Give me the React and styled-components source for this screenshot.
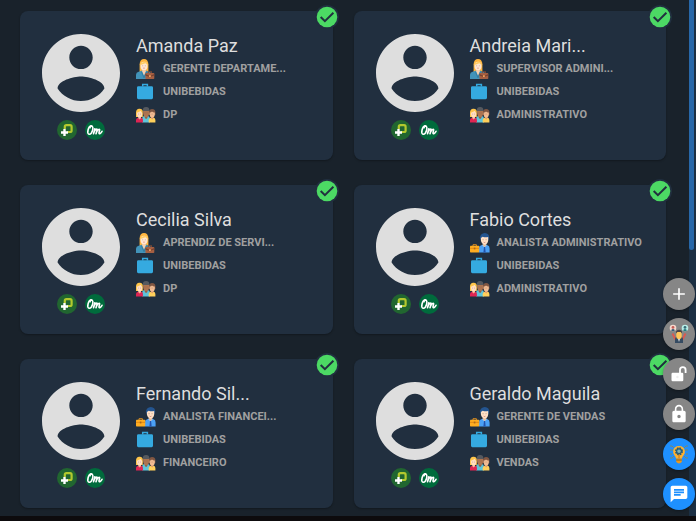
import React from "react";
import styled, { createGlobalStyle } from "styled-components";

const GlobalStyle = createGlobalStyle`
  *, *::before, *::after { box-sizing: border-box; }
  body {
    margin: 0;
    background: #19222b;
    font-family: Roboto, "Liberation Sans", sans-serif;
  }
`;

const Page = styled.div`
  display: flex;
  flex-direction: column;
  min-height: 100vh;
`;

const Content = styled.div`
  display: flex;
  flex: 1;
`;

const CardGrid = styled.main`
  flex: 1;
  min-width: 0;
  display: grid;
  grid-template-columns: repeat(2, minmax(0, 1fr));
  align-content: start;
  gap: 25px 21px;
  padding: 11px 23px 8px 20px;
`;

const ScrollTrack = styled.div`
  flex: 0 0 7px;
  background: #1b2f43;
`;

const ScrollThumb = styled.div`
  width: 5px;
  height: 48vh;
  border-radius: 0 0 3px 3px;
  background: #2767a8;
`;

const BottomStrip = styled.footer`
  height: 5px;
  background: #0d0b0d;
`;

const Card = styled.article`
  position: relative;
  display: flex;
  gap: 16px;
  min-height: 149px;
  padding: 23px 16px 16px 22px;
  border-radius: 8px;
  background: #212f3f;
  box-shadow: 0 1px 2px rgba(0, 0, 0, 0.3);
`;

const Profile = styled.div`
  flex: 0 0 auto;
  display: flex;
  flex-direction: column;
  align-items: center;
  gap: 8px;
`;

const Avatar = styled.svg`
  display: block;
  width: 78px;
  height: 78px;
  fill: #dedede;
`;

const Apps = styled.div`
  display: flex;
  gap: 8px;
  svg { display: block; width: 20px; height: 20px; }
`;

const Details = styled.div`
  min-width: 0;
  display: flex;
  flex-direction: column;
`;

const Name = styled.h2`
  margin: 0;
  font-size: 18px;
  font-weight: 400;
  line-height: 23px;
  color: #dedede;
  white-space: nowrap;
`;

const InfoList = styled.ul`
  margin: 0;
  padding: 0;
  list-style: none;
`;

const InfoItem = styled.li`
  display: flex;
  align-items: center;
  gap: 7px;
  height: 23px;
  font-size: 11px;
  font-weight: 700;
  line-height: 16px;
  color: #a0a0a0;
  white-space: nowrap;
  svg { flex: 0 0 20px; display: block; width: 20px; height: 20px; }
`;

const Badge = styled.span`
  position: absolute;
  top: -6px;
  right: -6px;
  width: 24px;
  height: 24px;
  svg { display: block; width: 24px; height: 24px; }
`;

const Actions = styled.nav`
  position: fixed;
  right: 1px;
  bottom: 11px;
  display: flex;
  flex-direction: column;
  gap: 8px;
`;

const ActionButton = styled.button`
  display: flex;
  align-items: center;
  justify-content: center;
  width: 32px;
  height: 32px;
  padding: 0;
  border: 0;
  border-radius: 50%;
  background: ${(p) => (p.$primary ? "#1e90ff" : "#868686")};
  box-shadow: 0 1px 3px rgba(0, 0, 0, 0.35);
  cursor: pointer;
  svg { display: block; width: 20px; height: 20px; fill: #fff; }
`;

const AvatarIcon = () => (
  <Avatar viewBox="2 2 20 20" role="img" aria-label="Avatar">
    <path d="M12 2C6.48 2 2 6.48 2 12s4.48 10 10 10 10-4.48 10-10S17.52 2 12 2zm0 3c1.66 0 3 1.34 3 3s-1.34 3-3 3-3-1.34-3-3 1.34-3 3-3zm0 14.2c-2.5 0-4.71-1.28-6-3.22.03-1.99 4-3.08 6-3.08 1.99 0 5.97 1.09 6 3.08-1.29 1.94-3.5 3.22-6 3.22z" />
  </Avatar>
);

const PlusAppIcon = () => (
  <svg viewBox="0 0 20 20" aria-hidden="true">
    <circle cx="10" cy="10" r="10" fill="#216630" />
    <path d="M7.8 9V6.8q0-1.6 1.6-1.6h3.6q1.6 0 1.6 1.6v3.6q0 1.6-1.6 1.6h-3" fill="none" stroke="#b3c92e" strokeWidth="2.2" />
    <path d="M7.5 9v7M4 12.5h7" stroke="#fff" strokeWidth="2.4" />
  </svg>
);

const OmAppIcon = () => (
  <svg viewBox="0 0 20 20" aria-hidden="true">
    <circle cx="10" cy="10" r="10" fill="#006b3c" />
    <g fill="none" stroke="#fff" strokeWidth="1.6" strokeLinecap="round" strokeLinejoin="round">
      <path d="M5.7 6.3C3.3 6.3 1.6 13.6 4 14.2 7 14.8 9.6 6.7 6.4 5.9c-1.4-.3-2 .9-1.2 1.7" />
      <path d="M9.8 8.7 8.5 13.7c.7-2.3 2.2-4.5 3.3-4.6.9 0-.4 3-.8 4.6.7-2.1 2-4.4 3.2-4.5 1 0-.3 2.7-.2 3.9.1 1.2 1.8.3 3-1.8" />
    </g>
  </svg>
);

const WomanIcon = () => (
  <svg viewBox="0 0 20 20" aria-hidden="true">
    <path d="M3.6 13V5.2Q4 0 8 0t4.4 5.2V13z" fill="#ffb640" />
    <path d="M0 20v-4.3q0-2.5 2.7-3L6.4 11.6h3.4l3.3 1.1q2.3.5 2.3 3V20z" fill="#4293b9" />
    <path d="M6.2 9.5h3.6v3L8 16.5l-1.8-4z" fill="#f9cfae" />
    <path d="m5.4 12.8 2.6 6 2.6-6" fill="none" stroke="#2e789d" strokeWidth=".8" />
    <ellipse cx="8" cy="6.9" rx="3.5" ry="4.2" fill="#ffe6d2" />
    <path d="M4.6 6V4.2L9 2.4l2.4 2.1V6L9.4 4.2z" fill="#ffcd66" />
    <path d="M6.5 6.8h.6M8.9 6.8h.6" stroke="#a97e6d" strokeWidth=".8" />
    <path d="M7.2 9q.8.7 1.6 0" fill="none" stroke="#e08078" strokeWidth=".8" />
    <path d="M12.2 14v-1.2h3.2V14" fill="none" stroke="#7c4935" strokeWidth="1.1" />
    <rect x="9.4" y="14" width="8.9" height="6" rx=".8" fill="#a55f42" />
    <path d="m9.4 15 4.5 2 4.4-2v1.6L13.9 18l-4.5-1.4z" fill="#77412f" />
    <path d="M13 16.3h1.8v1.6H13z" fill="#eda15f" />
  </svg>
);

const ManIcon = () => (
  <svg viewBox="0 0 20 20" aria-hidden="true">
    <path d="M8.8 19.5v-4q0-2.6 2.5-3.2l2.1-.8h2l2.1.8q2.1.6 2.1 3.2v4z" fill="#4ba0f5" />
    <path d="M12.8 10h3.4v2.5l-1.7 2-1.7-2z" fill="#e9b991" />
    <path d="m12.3 12 2.2 1.9 2.1-1.9" fill="none" stroke="#a9d3ff" strokeWidth=".7" />
    <path d="M14 14.1h1.1l.6 5.4h-2.3z" fill="#2453ac" />
    <path d="M9.9 4.5Q10.6.3 14.8 0q4.4.3 4.4 4.7l-.8 2.3h-7.6z" fill="#245590" />
    <path d="M10.9 5 12.7 3.7q2.5 1 5.5.2v3.7q-.6 4-3.6 4.1-3.1-.6-3.7-4.1z" fill="#ffe0c6" />
    <path d="M12.7 6.7h.7M15.7 6.7h.7" stroke="#8c6d61" strokeWidth=".8" />
    <path d="M13.7 9.2q.8.6 1.7 0" fill="none" stroke="#ca665d" strokeWidth=".7" />
    <path d="M3 13v-1.3h3.4V13" fill="none" stroke="#d78a21" strokeWidth="1" />
    <rect x="0" y="12.8" width="9.2" height="6.7" rx=".7" fill="#ffad21" />
    <path d="M0 14.8h9.2v1.1H0z" fill="#e78d12" />
    <path d="M3.8 14.6h1.6v1.8H3.8z" fill="#a9681d" />
  </svg>
);

const BriefcaseIcon = () => (
  <svg viewBox="0 0 20 20" aria-hidden="true">
    <path d="M1 5.600q0-1.400 1.400-1.400h13.200q1.400 0 1.400 1.400v10.200q0 1.400-1.400 1.400H2.400q-1.400 0-1.400-1.400z" fill="#35aae0" />
    <path d="M6.700 4.600V2.500h4.700v2.100" fill="none" stroke="#35aae0" strokeWidth="1.5" />
  </svg>
);

const PeopleIcon = () => (
  <svg viewBox="0 0 20 20" aria-hidden="true">
    <path d="M6.2 17.500v-4q0-2 2-2.400h3.700q2 .4 2 2.400v4z" fill="#5fc4da" />
    <path d="M8.800 10h2.600v3l-1.300 1-1.300-1z" fill="#956043" />
    <path d="M6.900 5Q6.800 2.200 10 2t3.400 3v3H6.900z" fill="#55595f" />
    <path d="M7.200 6h6v2.400Q12.800 12 10.100 12.200 7.600 12 7.200 8.400z" fill="#ae7450" />
    <path d="M0 12V7.300Q.3 3.500 3.500 3.700q3.600-.1 3.300 4.200V12z" fill="#ffc54a" />
    <path d="M0 17.500v-2.600q.2-1.900 2-2.200h3.300q1.600.3 1.600 2.200v2.600z" fill="#df2553" />
    <path d="M2.300 11H5v2.200l-1.300 1.300-1.400-1.300z" fill="#f4b895" />
    <path d="M.9 7.800Q3.900 7 4.500 5.800L6.200 8v1.400q-.3 3-2.700 3Q1.100 12.100.9 9.400z" fill="#ffdec2" />
    <path d="M13 10V7.300Q13 4.200 16.100 4q3.400.1 3.300 3.500V10z" fill="#805642" />
    <path d="M12.700 17.500V15q.2-2 2-2.300h3.200q1.300.3 1.500 2.300v2.500z" fill="#ffd05b" />
    <path d="M14.900 11h2.500v2l-1.200 1.500-1.300-1.500z" fill="#de9670" />
    <path d="M13.600 7.400q1.500.2 2.400-1 1.300 1.400 2.800 1v2.400q-.3 3-2.700 3-2.300-.2-2.500-3z" fill="#f2bc93" />
    <path d="M2.500 9.100H3m1.400 0h.5m3.700-1.200h.6m1.600 0h.6m3.400 1.200h.5m1.300 0h.5" stroke="#8f6355" strokeWidth=".6" />
  </svg>
);

const CheckIcon = () => (
  <svg viewBox="0 0 24 24" role="img" aria-label="Ativo">
    <circle cx="12" cy="12" r="12" fill="#212f3f" />
    <circle cx="12" cy="12" r="10.3" fill="#4cd964" />
    <path d="m5.700 12 4.200 4.200 8.500-8.400" fill="none" stroke="#212f3f" strokeWidth="2" />
  </svg>
);

const AddIcon = () => <svg viewBox="0 0 24 24"><path d="M19 13h-6v6h-2v-6H5v-2h6V5h2v6h6v2z" /></svg>;

const TeamIcon = () => (
  <svg viewBox="0 0 20 20">
    <path d="m3.500 9.500 3 6M16.500 9.500l-3 6" stroke="#d95a51" strokeWidth="2" />
    <circle cx="4" cy="4" r="3.3" fill="#f5d9ce" />
    <circle cx="16" cy="4" r="3.3" fill="#b9eee7" />
    <circle cx="4" cy="3.4" r="1.4" fill="#c55e58" />
    <path d="M2 6.300q2-2.700 4 0Q4 8 2 6.300" fill="#345d78" />
    <circle cx="16" cy="3.4" r="1.4" fill="#386d78" />
    <path d="M14 6.300q2-2.700 4 0-2 1.700-4 0" fill="#267d80" />
    <path d="M6 19v-4q0-2 2-2.500h4q2 .5 2 2.500v4z" fill="#354b62" />
    <path d="M8.500 12.500h3L10 18z" fill="#fff" />
    <rect x="7.300" y="7" width="5.400" height="8" rx="2.500" fill="#ffc65a" />
    <path d="M7.100 9.500V7.200Q10 4.500 12.900 7v2.500L11.700 8H8.400z" fill="#494247" />
  </svg>
);

const UnlockIcon = () => (
  <svg viewBox="0 0 20 20">
    <rect x="2.500" y="8.800" width="11.800" height="8.500" rx="1.200" />
    <path d="M11 9V5.900a2.800 2.800 0 0 1 5.600 0v3" fill="none" stroke="#fff" strokeWidth="1.8" />
    <circle cx="8.400" cy="13" r="1.200" fill="#eee" />
  </svg>
);

const LockIcon = () => (
  <svg viewBox="0 0 24 24">
    <path d="M18 8h-1V6c0-2.760-2.240-5-5-5S7 3.240 7 6v2H6c-1.100 0-2 .9-2 2v10c0 1.100.9 2 2 2h12c1.100 0 2-.9 2-2V10c0-1.100-.9-2-2-2zm-6 9c-1.100 0-2-.9-2-2s.9-2 2-2 2 .9 2 2-.9 2-2 2zm3.100-9H8.900V6c0-1.710 1.390-3.100 3.100-3.100 1.710 0 3.100 1.390 3.100 3.100v2z" />
  </svg>
);

const IdeaIcon = () => (
  <svg viewBox="0 0 20 20">
    <path d="M1 2h2l2 2M1 6h3M1 10h2M1 14h2l2-2M19 2h-2l-2 2M19 6h-3M19 10h-2M19 14h-2l-2-2" fill="none" stroke="#7f8767" strokeWidth="1" />
    <path d="M7 14.500Q6.800 12.800 5.200 11q-1.500-2-1-4.400.8-4.500 5.800-4.700 5 .2 5.800 4.700.5 2.400-1 4.400-1.600 1.800-1.800 3.500z" fill="#ffb22e" />
    <circle cx="10" cy="7.300" r="3" fill="none" stroke="#285c78" strokeWidth="2" strokeDasharray="1.6 .75" />
    <circle cx="10" cy="7.300" r="2.400" fill="#7db4b8" stroke="#285c78" strokeWidth="1.2" />
    <path d="M10 10.500v4" stroke="#c77618" />
    <path d="M7.200 14.500h5.600v3q-.2 1.500-2.800 2-2.400-.5-2.800-2z" fill="#ea981d" />
    <path d="M7.200 16h5.600" stroke="#6c552e" strokeWidth=".8" />
  </svg>
);

const ChatIcon = () => (
  <svg viewBox="0 0 24 24">
    <path d="M20 2H4c-1.100 0-1.990.9-1.990 2L2 22l4-4h14c1.100 0 2-.9 2-2V4c0-1.100-.9-2-2-2zM6 9h12v2H6V9zm8 5H6v-2h8v2zm4-6H6V6h12v2z" />
  </svg>
);

const people = [
  { name: "Amanda Paz", role: "GERENTE DEPARTAME...", dept: "DP", Icon: WomanIcon },
  { name: "Andreia Mari...", role: "SUPERVISOR ADMINI...", dept: "ADMINISTRATIVO", Icon: WomanIcon },
  { name: "Cecilia Silva", role: "APRENDIZ DE SERVI...", dept: "DP", Icon: WomanIcon },
  { name: "Fabio Cortes", role: "ANALISTA ADMINISTRATIVO", dept: "ADMINISTRATIVO", Icon: ManIcon },
  { name: "Fernando Sil...", role: "ANALISTA FINANCEI...", dept: "FINANCEIRO", Icon: ManIcon },
  { name: "Geraldo Maguila", role: "GERENTE DE VENDAS", dept: "VENDAS", Icon: ManIcon },
];

const actions = [
  { label: "Adicionar", Icon: AddIcon },
  { label: "Equipe", Icon: TeamIcon },
  { label: "Desbloquear", Icon: UnlockIcon },
  { label: "Bloquear", Icon: LockIcon },
  { label: "Ideias", Icon: IdeaIcon, primary: true },
  { label: "Mensagens", Icon: ChatIcon, primary: true },
];

function PersonCard({ person }) {
  const RoleIcon = person.Icon;
  return (
    <Card>
      <Profile>
        <AvatarIcon />
        <Apps>
          <PlusAppIcon />
          <OmAppIcon />
        </Apps>
      </Profile>
      <Details>
        <Name>{person.name}</Name>
        <InfoList>
          <InfoItem><RoleIcon />{person.role}</InfoItem>
          <InfoItem><BriefcaseIcon />UNIBEBIDAS</InfoItem>
          <InfoItem><PeopleIcon />{person.dept}</InfoItem>
        </InfoList>
      </Details>
      <Badge><CheckIcon /></Badge>
    </Card>
  );
}

export default function App() {
  return (
    <Page>
      <GlobalStyle />
      <Content>
        <CardGrid>
          {people.map((person) => <PersonCard key={person.name} person={person} />)}
        </CardGrid>
        <ScrollTrack><ScrollThumb /></ScrollTrack>
      </Content>
      <BottomStrip />
      <Actions aria-label="Ações">
        {actions.map(({ label, Icon, primary }) => (
          <ActionButton key={label} type="button" aria-label={label} $primary={primary}>
            <Icon />
          </ActionButton>
        ))}
      </Actions>
    </Page>
  );
}
